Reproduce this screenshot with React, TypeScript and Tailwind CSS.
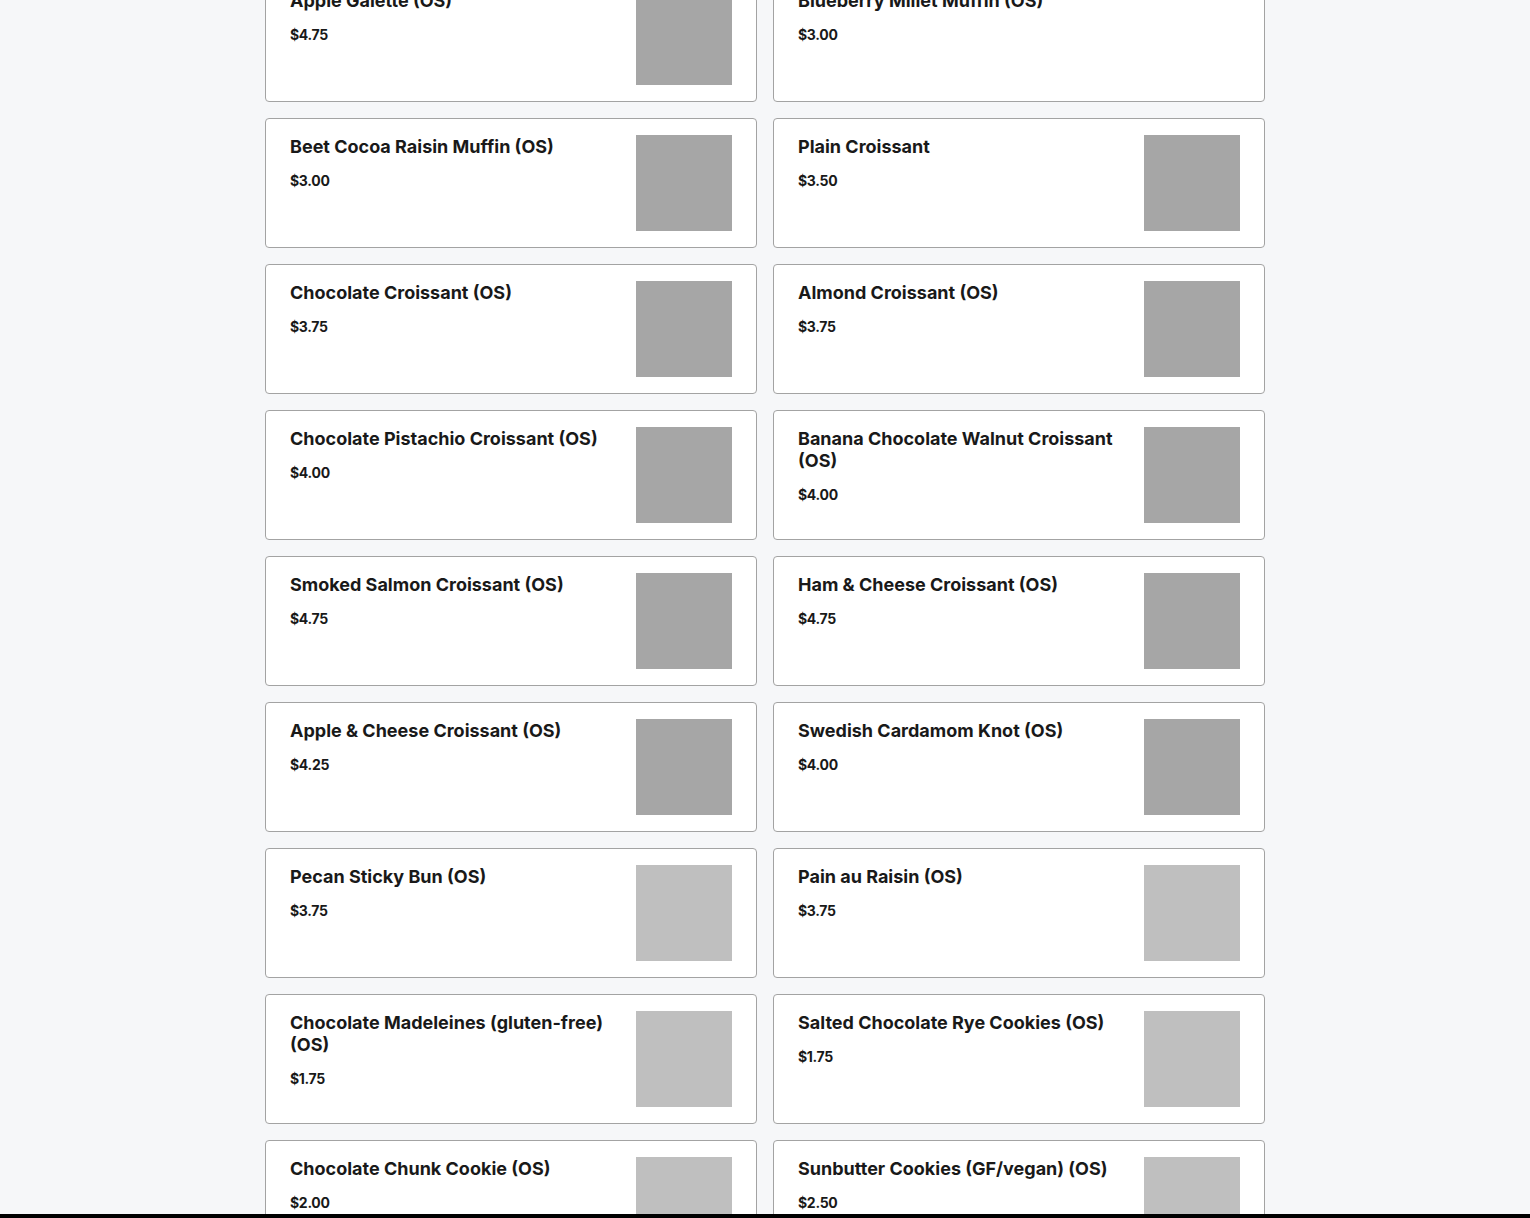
import React from "react";

type Item = { name: string; price: string; img: "dark" | "light" | null };

const items: Item[] = [
  { name: "Apple Galette (OS)", price: "$4.75", img: "dark" },
  { name: "Blueberry Millet Muffin (OS)", price: "$3.00", img: null },
  { name: "Beet Cocoa Raisin Muffin (OS)", price: "$3.00", img: "dark" },
  { name: "Plain Croissant", price: "$3.50", img: "dark" },
  { name: "Chocolate Croissant (OS)", price: "$3.75", img: "dark" },
  { name: "Almond Croissant (OS)", price: "$3.75", img: "dark" },
  { name: "Chocolate Pistachio Croissant (OS)", price: "$4.00", img: "dark" },
  { name: "Banana Chocolate Walnut Croissant (OS)", price: "$4.00", img: "dark" },
  { name: "Smoked Salmon Croissant (OS)", price: "$4.75", img: "dark" },
  { name: "Ham & Cheese Croissant (OS)", price: "$4.75", img: "dark" },
  { name: "Apple & Cheese Croissant (OS)", price: "$4.25", img: "dark" },
  { name: "Swedish Cardamom Knot (OS)", price: "$4.00", img: "dark" },
  { name: "Pecan Sticky Bun (OS)", price: "$3.75", img: "light" },
  { name: "Pain au Raisin (OS)", price: "$3.75", img: "light" },
  { name: "Chocolate Madeleines (gluten-free) (OS)", price: "$1.75", img: "light" },
  { name: "Salted Chocolate Rye Cookies (OS)", price: "$1.75", img: "light" },
  { name: "Chocolate Chunk Cookie (OS)", price: "$2.00", img: "light" },
  { name: "Sunbutter Cookies (GF/vegan) (OS)", price: "$2.50", img: "light" },
];

function Card({ item }: { item: Item }) {
  return (
    <div className="flex h-[130px] gap-4 rounded-[4px] border border-[#a3a3a3] bg-white pb-4 pl-6 pr-6 pt-4">
      <div className="mt-[1px] flex min-w-0 flex-1 flex-col">
        <div className="text-[18px] font-bold leading-[22px] text-[#191919]">{item.name}</div>
        <div className="mt-[13px] text-[14px] font-bold leading-[20px] tracking-[-0.3px] text-[#191919]">{item.price}</div>
      </div>
      {item.img && (
        <div
          className={
            item.img === "dark"
              ? "h-[96px] w-[96px] shrink-0 bg-[#a6a6a6]"
              : "h-[96px] w-[96px] shrink-0 bg-[#bfbfbf]"
          }
        />
      )}
    </div>
  );
}

export default function App() {
  return (
    <div
      className="min-h-[1218px] overflow-hidden bg-[#f6f7f9]"
      style={{ fontFamily: "Inter, 'Noto Sans', sans-serif" }}
    >
      <div className="mx-auto -mt-[28px] grid w-[1000px] grid-cols-2 gap-4">
        {items.map((it, i) => (
          <Card key={i} item={it} />
        ))}
      </div>
      <div className="fixed bottom-0 left-0 right-0 h-[4px] bg-black" />
    </div>
  );
}
